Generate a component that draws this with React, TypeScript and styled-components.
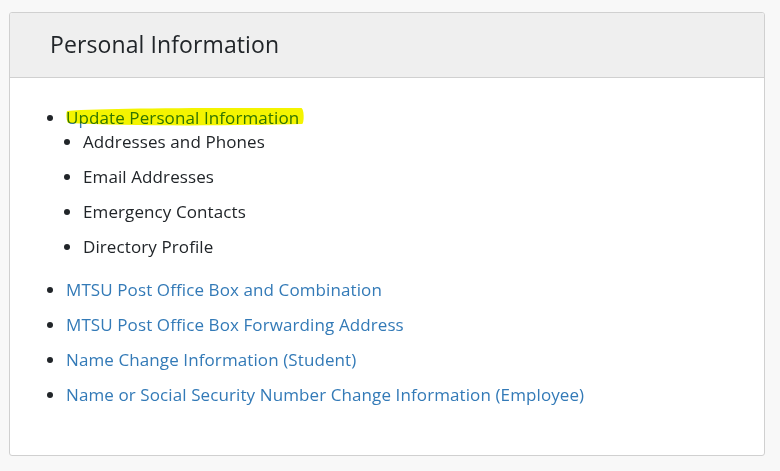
import styled, { createGlobalStyle } from "styled-components";

const GlobalStyle = createGlobalStyle`
  html, body {
    margin: 0;
    padding: 0;
    background: #f8f8f8;
  }
  body {
    font-family: "Open Sans", "Noto Sans", sans-serif;
    color: #212529;
  }
`;

type Item = { label: string; href?: string; highlight?: boolean; children?: string[] };

const items: Item[] = [
  {
    label: "Update Personal Information",
    href: "#",
    highlight: true,
    children: ["Addresses and Phones", "Email Addresses", "Emergency Contacts", "Directory Profile"],
  },
  { label: "MTSU Post Office Box and Combination", href: "#" },
  { label: "MTSU Post Office Box Forwarding Address", href: "#" },
  { label: "Name Change Information (Student)", href: "#" },
  { label: "Name or Social Security Number Change Information (Employee)", href: "#" },
];

export default function App() {
  return (
    <>
      <GlobalStyle />
      <Page>
        <Panel>
          <PanelHeader>
            <Title>Personal Information</Title>
          </PanelHeader>
          <PanelBody>
            <List>
              {items.map((item) => (
                <Entry key={item.label} $nested={!!item.children}>
                  <Link href={item.href}>
                    {item.label}
                    {item.highlight && (
                      <Marker viewBox="0 0 240 20" preserveAspectRatio="none">
                        <path
                          d="M1 5 C40 2 120 2 236 2 C239 3 239 16 237 18 C150 20 60 20 2 17 C0 13 0 8 1 5 Z"
                          fill="#f4f400"
                        />
                      </Marker>
                    )}
                  </Link>
                  {item.children && (
                    <SubList>
                      {item.children.map((c) => (
                        <SubEntry key={c}>{c}</SubEntry>
                      ))}
                    </SubList>
                  )}
                </Entry>
              ))}
            </List>
          </PanelBody>
        </Panel>
      </Page>
    </>
  );
}

const Page = styled.div`
  padding: 12px 15px 16px 9px;
`;

const Panel = styled.section`
  background: #fff;
  border: 1px solid #d0d0d0;
  border-radius: 3px;
  overflow: hidden;
`;

const PanelHeader = styled.header`
  background: #efefef;
  border-bottom: 1px solid #d0d0d0;
  height: 64px;
  display: flex;
  align-items: center;
  padding: 0 40px;
`;

const Title = styled.h2`
  margin: 0 0 2px 0;
  font-size: 23px;
  font-weight: 400;
  letter-spacing: 0.1px;
  color: #212529;
`;

const PanelBody = styled.div`
  padding: 29px 15px 36px 15px;
`;

const List = styled.ul`
  margin: 0;
  padding-left: 41px;
  list-style: disc;
`;

const Entry = styled.li<{ $nested: boolean }>`
  font-size: 17px;
  letter-spacing: 0.1px;
  line-height: 22px;
  margin-bottom: ${(p) => (p.$nested ? 21 : 13)}px;
`;

const Link = styled.a`
  position: relative;
  color: #337ab7;
  text-decoration: none;
`;

const Marker = styled.svg`
  position: absolute;
  left: 0;
  top: 0;
  width: calc(100% + 6px);
  height: 20px;
  mix-blend-mode: multiply;
  pointer-events: none;
`;

const SubList = styled.ul`
  margin: 2px 0 0 0;
  padding-left: 17px;
  list-style: disc;
`;

const SubEntry = styled.li`
  color: #212529;
  margin-bottom: 13px;
  &:last-child {
    margin-bottom: 0;
  }
`;
